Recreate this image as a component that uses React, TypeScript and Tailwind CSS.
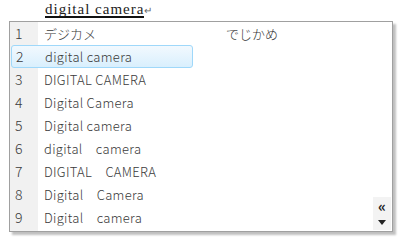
const rows = [
  "digital camera",
  "DIGITAL CAMERA",
  "Digital Camera",
  "Digital camera",
  "digital　camera",
  "DIGITAL　CAMERA",
  "Digital　Camera",
  "Digital　camera",
];

export default function App() {
  return (
    <div className="w-[400px] h-[242px] bg-white relative overflow-hidden font-['Noto_Sans_CJK_JP',sans-serif]">
      <div className="h-[21px] pl-[45px] flex items-start">
        <span className="mt-[2px] text-[15px] leading-[14px] text-[#222] border-b-2 border-[#111] font-['Liberation_Serif',serif] tracking-[1px]">
          digital camera
        </span>
        <span className="text-[10px] leading-[10px] text-[#666] mt-[5px]">↵</span>
      </div>
      <div className="ml-[9px] w-[384px] h-[211px] border border-[#a0a0a0] bg-white relative shadow-[3px_3px_2px_rgba(0,0,0,0.25)]">
        <div className="absolute left-0 top-0 bottom-0 w-[28px] bg-[#f1f1f1]" />
        <div className="relative flex flex-col text-[13px] text-[#3a3a3a] font-light">
          <div className="h-[23px] flex items-center">
            <span className="w-[28px] pl-[5px] text-[14px]">1</span>
            <span className="w-[188px] pl-[6px]">デジカメ</span>
            <span>でじかめ</span>
          </div>
          {rows.map((r, i) => (
            <div key={i} className={"h-[23px] flex items-center " + (i === 0 ? "mx-[1px] rounded-[3px] border border-[#9fd8fa] bg-gradient-to-b from-[#f2f9fe] to-[#d9effd] w-[182px]" : "")}>
              <span className={(i === 0 ? "w-[27px] pl-[4px]" : "w-[28px] pl-[5px]") + " text-[14px]"}>{i + 2}</span>
              <span className="pl-[6px] whitespace-pre tracking-[0.3px]">{r}</span>
            </div>
          ))}
        </div>
        <div className="absolute right-[1px] bottom-[1px] w-[18px] flex flex-col items-center bg-[#f3f3f3] text-[#222]">
          <span className="text-[15px] leading-[18px] font-bold">«</span>
          <svg width="8" height="5" viewBox="0 0 8 5" className="my-[5px]"><path d="M0 0h8L4 5z" fill="#222" /></svg>
        </div>
      </div>
    </div>
  );
}
